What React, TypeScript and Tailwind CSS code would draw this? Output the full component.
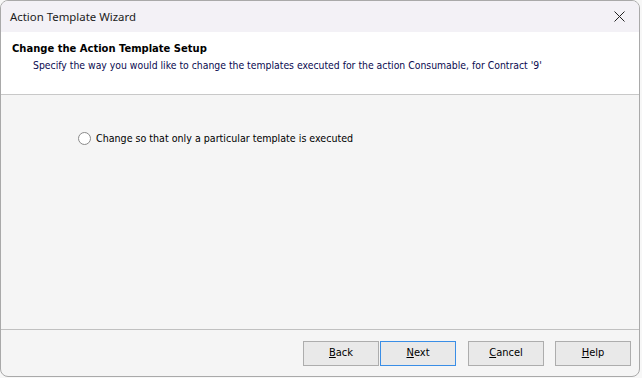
import React from "react";

const tahoma = { fontFamily: '"DejaVu Sans Condensed", "DejaVu Sans", sans-serif' };

function Btn({ label, acc, primary }: { label: string; acc: number; primary?: boolean }) {
  return (
    <button
      className={`w-[76px] h-[25px] flex items-center justify-center text-[11px] text-black bg-[#e9e9e9] border ${primary ? "border-[#3a8ee6]" : "border-[#adadad]"}`}
    >
      <span>
        {label.slice(0, acc)}
        <span className="underline">{label[acc]}</span>
        {label.slice(acc + 1)}
      </span>
    </button>
  );
}

export default function App() {
  return (
    <div className="w-[642px] h-[378px] bg-[#f7f7f7]" style={tahoma}>
      <div className="w-[640px] h-[377px] border border-[#a9a9a9] rounded-[8px] overflow-hidden flex flex-col bg-[#f5f5f5]">
        <div className="h-[31px] shrink-0 bg-[#f3f1f6] flex items-center justify-between pl-[9px] pr-[14px]">
          <span className="text-[11.4px] text-[#1b1b1b]" style={{ fontFamily: '"Noto Sans", "Open Sans", sans-serif' }}>
            Action Template Wizard
          </span>
          <svg width="11" height="11" viewBox="0 0 11 11" className="text-[#222]">
            <path d="M0.5 0.5 L10.5 10.5 M10.5 0.5 L0.5 10.5" stroke="currentColor" strokeWidth="1" />
          </svg>
        </div>
        <div className="h-[63px] shrink-0 bg-white border-b border-[#c8c8c8] pl-[11px] pt-[10px]">
          <div className="text-[11.1px] font-bold text-black leading-[14px]">Change the Action Template Setup</div>
          <div className="text-[10.35px] text-[#0a0a50] leading-[14px] pl-[21px] pt-[2px]">
            Specify the way you would like to change the templates executed for the action Consumable, for Contract '9'
          </div>
        </div>
        <div className="flex-1 flex flex-col">
          <div className="flex-1 pt-[36px] pl-[77px]">
            <label className="flex items-center gap-[5px] text-[10.6px] text-black">
              <span className="w-[13px] h-[13px] rounded-full border border-[#8a8a8a] bg-white" />
              Change so that only a particular template is executed
            </label>
          </div>
          <div className="h-[47px] shrink-0 border-t border-[#c0c0c0] flex items-start pt-[11px] pl-[302px] gap-[1px]">
            <Btn label="Back" acc={0} />
            <Btn label="Next" acc={0} primary />
            <div className="w-[10px]" />
            <Btn label="Cancel" acc={0} />
            <div className="w-[9px]" />
            <Btn label="Help" acc={0} />
          </div>
        </div>
      </div>
    </div>
  );
}
